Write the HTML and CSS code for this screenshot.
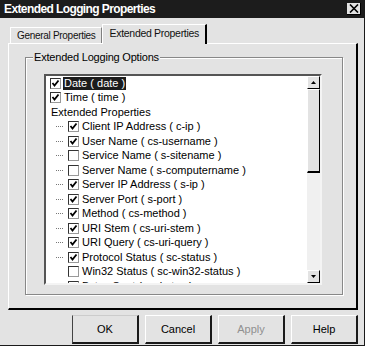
FILE: index.html
```html
<!DOCTYPE html>
<html lang="en">
<head>
    <meta charset="UTF-8">
    <title>Extended Logging Properties</title>
    <link rel="stylesheet" href="styles.css">
</head>
<body>
    <div class="window">
        <div class="titlebar">
            <span class="title">Extended Logging Properties</span>
            <span class="close">
                <svg width="10" height="9" viewBox="0 0 10 9">
                    <path d="M1 0.5 L9 8.5 M9 0.5 L1 8.5" stroke="#000" stroke-width="1.6" fill="none"/>
                </svg>
            </span>
        </div>
        <div class="content">
            <div class="tabs">
                <div class="tab">General Properties</div>
                <div class="tab active">Extended Properties</div>
            </div>
            <div class="panel">
                <div class="group">
                    <span class="group-label">Extended Logging Options</span>
                    <div class="listbox">
                        <ul class="items">
                            <li class="item"><span class="check on"></span><span class="label selected">Date ( date )</span></li>
                            <li class="item"><span class="check on"></span><span class="label">Time ( time )</span></li>
                            <li class="item heading"><span class="label">Extended Properties</span></li>
                            <li class="item sub"><span class="dots"></span><span class="check on"></span><span class="label">Client IP Address ( c-ip )</span></li>
                            <li class="item sub"><span class="dots"></span><span class="check on"></span><span class="label">User Name ( cs-username )</span></li>
                            <li class="item sub"><span class="dots"></span><span class="check"></span><span class="label">Service Name ( s-sitename )</span></li>
                            <li class="item sub"><span class="dots"></span><span class="check"></span><span class="label">Server Name ( s-computername )</span></li>
                            <li class="item sub"><span class="dots"></span><span class="check on"></span><span class="label">Server IP Address ( s-ip )</span></li>
                            <li class="item sub"><span class="dots"></span><span class="check on"></span><span class="label">Server Port ( s-port )</span></li>
                            <li class="item sub"><span class="dots"></span><span class="check on"></span><span class="label">Method ( cs-method )</span></li>
                            <li class="item sub"><span class="dots"></span><span class="check on"></span><span class="label">URI Stem ( cs-uri-stem )</span></li>
                            <li class="item sub"><span class="dots"></span><span class="check on"></span><span class="label">URI Query ( cs-uri-query )</span></li>
                            <li class="item sub"><span class="dots"></span><span class="check on"></span><span class="label">Protocol Status ( sc-status )</span></li>
                            <li class="item sub"><span class="nodots"></span><span class="check"></span><span class="label">Win32 Status ( sc-win32-status )</span></li>
                            <li class="item sub"><span class="nodots"></span><span class="check"></span><span class="label">Bytes Sent ( sc-bytes )</span></li>
                        </ul>
                        <div class="scrollbar">
                            <div class="arrow">
                                <svg width="5" height="3" viewBox="0 0 5 3"><path d="M2.5 0 L5 3 L0 3 Z" fill="#000"/></svg>
                            </div>
                            <div class="thumb"></div>
                            <div class="track"></div>
                            <div class="arrow">
                                <svg width="5" height="3" viewBox="0 0 5 3"><path d="M0 0 L5 0 L2.5 3 Z" fill="#000"/></svg>
                            </div>
                        </div>
                    </div>
                </div>
            </div>
            <div class="buttons">
                <button class="btn default">OK</button>
                <button class="btn">Cancel</button>
                <button class="btn disabled">Apply</button>
                <button class="btn">Help</button>
            </div>
        </div>
    </div>
</body>
</html>
```

FILE: styles.css
```css
body {
    margin: 0;
    background: #e3e3e3;
    font-family: "Liberation Sans", Arial, sans-serif;
    font-size: 11px;
    color: #000;
}

.window {
    width: 364px;
    height: 345px;
    background: #e3e3e3;
    border-right: 1px solid #1a1a1a;
    border-bottom: 1px solid #1a1a1a;
}

.titlebar {
    height: 18px;
    background: #1c1c1c;
    display: flex;
    align-items: center;
    justify-content: space-between;
    padding: 0 3px 0 4px;
}

.title {
    color: #fff;
    font-weight: bold;
    font-size: 12px;
    letter-spacing: -0.6px;
}

.close {
    width: 14px;
    height: 12px;
    background: #e3e3e3;
    border-right: 1px solid #000;
    border-bottom: 1px solid #000;
    display: flex;
    align-items: center;
    justify-content: center;
    box-sizing: border-box;
}

.content {
    padding: 7px 6px 0 8px;
}

.tabs {
    display: flex;
    align-items: flex-end;
    height: 18px;
    padding-left: 2px;
}

.tab {
    height: 15px;
    line-height: 15px;
    padding: 0 5px 0 6px;
    border-top: 1px solid #fff;
    border-left: 1px solid #fff;
    border-right: 1px solid #808080;
    font-size: 10px;
    letter-spacing: -0.3px;
    color: #111;
}

.tab.active {
    height: 19px;
    line-height: 17px;
    margin-bottom: -1px;
    padding: 0 6px 0 7px;
    border-right: 2px solid #000;
    background: #e3e3e3;
    font-size: 10.5px;
}

.panel {
    height: 264px;
    border-top: 1px solid #fff;
    border-left: 1px solid #fff;
    border-right: 2px solid #000;
    border-bottom: 2px solid #000;
}

.group {
    margin: 13px 0 0 16px;
    width: 316px;
    height: 236px;
    border: 1px solid #888;
    box-shadow: 1px 1px 0 #fff, inset 1px 1px 0 #fff;
}

.group-label {
    display: inline-block;
    margin: -7px 0 0 7px;
    padding: 0 1px;
    background: #e3e3e3;
    line-height: 13px;
    vertical-align: top;
    letter-spacing: -0.2px;
}

.listbox {
    margin: 4px 0 0 18px;
    width: 274px;
    height: 207px;
    display: flex;
    background: #fff;
    border-top: 2px solid #555;
    border-left: 2px solid #555;
    border-right: 2px solid #f4f4f4;
    border-bottom: 2px solid #f4f4f4;
    overflow: hidden;
}

.items {
    list-style: none;
    margin: 0;
    padding: 0 0 0 4px;
    flex: 1;
}

.item {
    height: 14.5px;
    display: flex;
    align-items: center;
    white-space: nowrap;
}

.dots {
    width: 7px;
    height: 1px;
    margin: 0 5px 0 6px;
    background: repeating-linear-gradient(90deg, #777 0 1px, transparent 1px 2px);
}

.nodots {
    width: 7px;
    margin: 0 5px 0 6px;
}

.check {
    width: 11px;
    height: 11px;
    box-sizing: border-box;
    border: 1px solid #333;
    border-right-color: #999;
    border-bottom-color: #999;
    background: #fff;
    margin-right: 2px;
    flex-shrink: 0;
}

.check.on {
    background: #fff url("data:image/svg+xml;utf8,<svg xmlns='http://www.w3.org/2000/svg' width='9' height='9' viewBox='0 0 9 9'><path d='M1.5 4 L3.5 6.5 L7.5 1.5' stroke='black' stroke-width='1.8' fill='none'/></svg>") center no-repeat;
}

.label {
    padding: 0 1px;
    line-height: 13px;
}

.label.selected {
    background: #1c1c1c;
    color: #fff;
}

.scrollbar {
    width: 13px;
    display: flex;
    flex-direction: column;
    background: #efefef;
}

.arrow {
    height: 13px;
    box-sizing: border-box;
    background: #e3e3e3;
    border-top: 1px solid #fff;
    border-left: 1px solid #fff;
    border-right: 1px solid #000;
    border-bottom: 1px solid #000;
    display: flex;
    align-items: center;
    justify-content: center;
}

.thumb {
    height: 84px;
    box-sizing: border-box;
    background: #e3e3e3;
    border-top: 1px solid #fff;
    border-left: 1px solid #fff;
    border-right: 1px solid #000;
    border-bottom: 2px solid #000;
}

.track {
    flex: 1;
    background: #f0f0f0;
}

.buttons {
    display: flex;
    justify-content: flex-end;
    gap: 6px;
    margin-top: 5px;
}

.btn {
    width: 67px;
    height: 29px;
    background: #e3e3e3;
    font-family: "Liberation Sans", Arial, sans-serif;
    font-size: 11px;
    color: #000;
    border-top: 1px solid #fff;
    border-left: 1px solid #fff;
    border-right: 2px solid #1a1a1a;
    border-bottom: 2px solid #1a1a1a;
    padding: 0;
}

.btn.default {
    border-left-color: #444;
    border-top-color: #ccc;
}

.btn.disabled {
    color: #909090;
}
```
